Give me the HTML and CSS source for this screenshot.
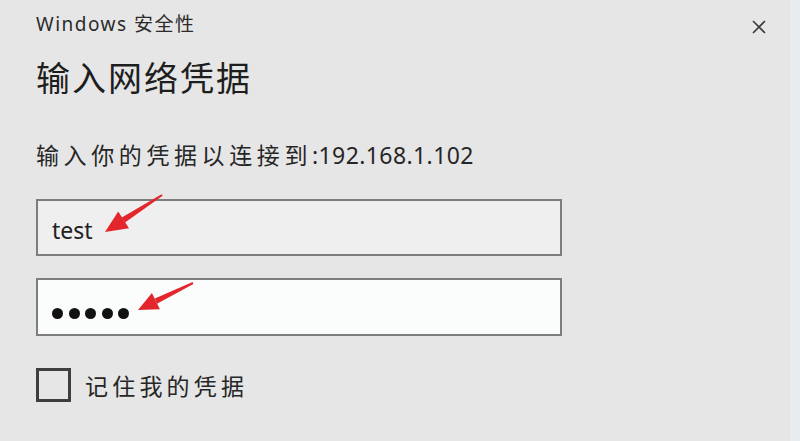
FILE: index.html
```html
<!DOCTYPE html>
<html lang="zh-CN">
<head>
    <meta charset="UTF-8">
    <meta name="viewport" content="width=device-width, initial-scale=1">
    <title>Windows 安全性</title>
    <link rel="stylesheet" href="styles.css">
</head>
<body>

    <div class="dialog">
        <div class="top-bar">
            <span class="app-name">Windows 安全性</span>
            <button class="close-btn" aria-label="关闭">
                <svg width="14" height="14" viewBox="0 0 14 14">
                    <path d="M1 1 L13 13 M13 1 L1 13" stroke="#3a3a3a" stroke-width="1.6" fill="none"/>
                </svg>
            </button>
        </div>

        <h1 class="title">输入网络凭据</h1>
        <p class="message">输入你的凭据以连接到<span class="addr">:192.168.1.102</span></p>

        <!-- 用户名 -->
        <div class="field field-user">
            <span class="value">test</span>
            <svg class="arrow" width="526" height="57">
                <polygon points="69,33 93,29.2 82.2,12.5" fill="#e2262c"/>
                <polygon points="89,23.6 85.8,18.6 125.6,-4.8 126.6,-3.2" fill="#e2262c"/>
            </svg>
        </div>

        <!-- 密码 -->
        <div class="field field-pass">
            <span class="dots"><i></i><i></i><i></i><i></i><i></i></span>
            <svg class="arrow" width="526" height="58">
                <polygon points="102,32 123.9,31.3 115.9,15.1" fill="#e2262c"/>
                <polygon points="121,25.8 118.8,20.6 156.6,4.1 157.4,5.9" fill="#e2262c"/>
            </svg>
        </div>

        <label class="remember">
            <span class="box"></span>
            <span class="remember-text">记住我的凭据</span>
        </label>
    </div>

</body>
</html>
```

FILE: styles.css
```css
body {
    margin: 0;
    padding: 0;
    background-color: #e6e6e6;
    color: #222222;
    font-family: "Noto Sans", "Noto Sans CJK SC", sans-serif;
    height: 441px;
    overflow: hidden;
}

.dialog {
    display: flex;
    flex-direction: column;
    align-items: flex-start;
    padding: 10px 24px 0 36px;
    border-right: 10px solid #e9ecef;
    height: 431px;
}

.top-bar {
    display: flex;
    justify-content: space-between;
    align-items: center;
    align-self: stretch;
    height: 26px;
}

.app-name {
    font-size: 19px;
    letter-spacing: 1.5px;
    color: #2b2b2b;
}

.close-btn {
    background: none;
    border: none;
    padding: 0;
    margin-top: 8px;
    width: 14px;
    height: 14px;
    cursor: pointer;
}

.close-btn svg {
    display: block;
}

.title {
    margin: 20px 0 0 0;
    font-size: 34px;
    line-height: 44px;
    font-weight: 400;
    letter-spacing: 2px;
    color: #1e1e1e;
}

.message {
    margin: 39px 0 0 0;
    font-size: 23px;
    line-height: 32px;
    letter-spacing: 4.6px;
    color: #262626;
}

.addr {
    letter-spacing: 0.4px;
}

/* 输入框 */
.field {
    position: relative;
    box-sizing: border-box;
    width: 526px;
    border: 2px solid #7d7d7d;
    display: flex;
    align-items: center;
    padding-left: 14px;
}

.field-user {
    margin-top: 28px;
    height: 57px;
    background-color: #efefef;
    padding-top: 4px;
}

.field-pass {
    margin-top: 22px;
    height: 58px;
    background-color: #fbfdfd;
    padding-top: 12px;
}

.value {
    font-size: 23px;
    color: #222222;
}

.dots {
    display: flex;
    gap: 5.5px;
}

.dots i {
    display: block;
    width: 11px;
    height: 11px;
    border-radius: 50%;
    background-color: #111111;
}

/* 红色箭头标注 */
.arrow {
    position: absolute;
    left: -2px;
    top: -2px;
    overflow: visible;
    pointer-events: none;
}

/* 记住凭据 */
.remember {
    display: flex;
    align-items: center;
    margin-top: 32px;
    cursor: pointer;
}

.box {
    box-sizing: border-box;
    width: 35px;
    height: 34px;
    border: 3px solid #3e3e3e;
}

.remember-text {
    margin-left: 14px;
    font-size: 23px;
    letter-spacing: 4.2px;
    color: #262626;
}
```
